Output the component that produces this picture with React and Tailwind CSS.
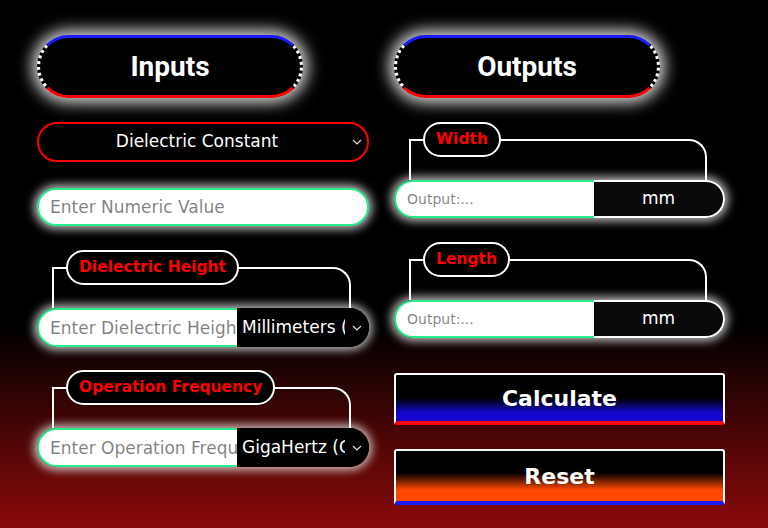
import React from 'react'

const Chevron = ({ className }) => (
    <svg className={className} width="10" height="6" viewBox="0 0 10 6" fill="none" stroke="currentColor" strokeWidth="1.2">
        <path d="M1 1l4 4 4-4" />
    </svg>
)

const HeaderPill = ({ children }) => (
    <div className="w-[266px] h-[63px] rounded-full bg-black border-[3px] border-t-[#1a1aff] border-b-[#ff0000] border-x-white [border-left-style:dotted] [border-right-style:dotted] shadow-[0_0_15px_5px_rgba(255,255,255,0.85)] flex items-center justify-center">
        <span className="font-['Roboto',sans-serif] font-bold text-[28px] text-white leading-none">{children}</span>
    </div>
)

const Group = ({ label, children }) => (
    <div className="flex flex-col">
        <fieldset className="ml-[15px] mr-[18px] border-2 border-b-0 border-white rounded-tr-[18px] p-0 m-0 min-w-0">
            <legend className="ml-[12px] h-[35px] px-[11px] rounded-full border-2 border-white bg-black text-[#ff0000] font-bold text-[15.5px] leading-[31px] whitespace-nowrap">
                {label}
            </legend>
            <div className="h-[23px]" />
        </fieldset>
        {children}
    </div>
)

const UnitRow = ({ placeholder, options }) => (
    <div className="flex h-[39px] w-[332px] rounded-full shadow-[0_0_10px_3px_rgba(255,255,255,0.75)]">
        <input
            placeholder={placeholder}
            className="w-[200px] h-full bg-white border-2 border-r-0 border-[#28ec8c] rounded-l-full pl-[11px] text-[17px] text-black outline-none"
        />
        <div className="relative w-[132px] h-full">
            <select className="appearance-none w-full h-full bg-black text-white text-[17px] rounded-r-full pl-[5px] pr-[24px] outline-none">
                {options.map((o) => (
                    <option key={o}>{o}</option>
                ))}
            </select>
            <Chevron className="absolute right-[7px] top-[17px] text-[#ddd] pointer-events-none" />
        </div>
    </div>
)

const OutputRow = () => (
    <div className="flex h-[38px] w-[331px] rounded-full shadow-[0_0_10px_3px_rgba(255,255,255,0.75)]">
        <input
            readOnly
            placeholder="Output:..."
            className="w-[200px] h-full bg-white border-2 border-r-0 border-[#28ec8c] rounded-l-full pl-[11px] text-[14px] outline-none"
        />
        <div className="flex-1 h-full bg-[#0a0a0a] border-2 border-l-0 border-white rounded-r-full flex items-center justify-center text-white text-[17px]">
            mm
        </div>
    </div>
)

export default function App() {
    return (
        <div className="w-full h-screen overflow-hidden bg-[linear-gradient(to_bottom,#000_62%,#8b0a0a_100%)] font-['DejaVu_Sans',sans-serif]">
            <div className="flex pl-[37px] pt-[35px] gap-[25px]">
                {/* Inputs */}
                <div className="w-[332px] flex flex-col">
                    <HeaderPill>Inputs</HeaderPill>
                    <div className="relative mt-[24px] h-[40px] w-full">
                        <select className="appearance-none h-full w-full bg-black text-white text-[17px] border-2 border-[#ff0000] rounded-full text-center [text-align-last:center] pr-[12px] outline-none">
                            <option>Dielectric Constant</option>
                            <option>Air</option>
                            <option>FR-4</option>
                        </select>
                        <Chevron className="absolute right-[7px] top-[17px] text-[#ddd] pointer-events-none" />
                    </div>
                    <input
                        placeholder="Enter Numeric Value"
                        className="mt-[26px] h-[38px] w-full bg-white border-2 border-[#28ec8c] rounded-full pl-[11px] text-[17px] outline-none shadow-[0_0_10px_3px_rgba(255,255,255,0.75)]"
                    />
                    <div className="mt-[24px]">
                        <Group label="Dielectric Height">
                            <UnitRow placeholder="Enter Dielectric Height" options={['Millimeters (mm)', 'Centimeters (cm)', 'Meters (m)']} />
                        </Group>
                    </div>
                    <div className="mt-[23px]">
                        <Group label="Operation Frequency">
                            <UnitRow placeholder="Enter Operation Frequency" options={['GigaHertz (GHz)', 'MegaHertz (MHz)']} />
                        </Group>
                    </div>
                </div>

                {/* Outputs */}
                <div className="w-[331px] flex flex-col">
                    <HeaderPill>Outputs</HeaderPill>
                    <div className="mt-[24px]">
                        <Group label="Width">
                            <OutputRow />
                        </Group>
                    </div>
                    <div className="mt-[24px]">
                        <Group label="Length">
                            <OutputRow />
                        </Group>
                    </div>
                    <button className="mt-[35px] h-[52px] w-full rounded-[3px] border-2 border-white border-b-[4px] border-b-[#ff0000] bg-[linear-gradient(to_bottom,#000_50%,#1508cc_82%)] text-white font-bold text-[22px]">
                        Calculate
                    </button>
                    <button className="mt-[24px] h-[56px] w-full rounded-[3px] border-2 border-white border-b-[4px] border-b-[#1a1aff] bg-[linear-gradient(to_bottom,#000_44%,#ff4800_78%)] text-white font-bold text-[22px]">
                        Reset
                    </button>
                </div>
            </div>
        </div>
    )
}
